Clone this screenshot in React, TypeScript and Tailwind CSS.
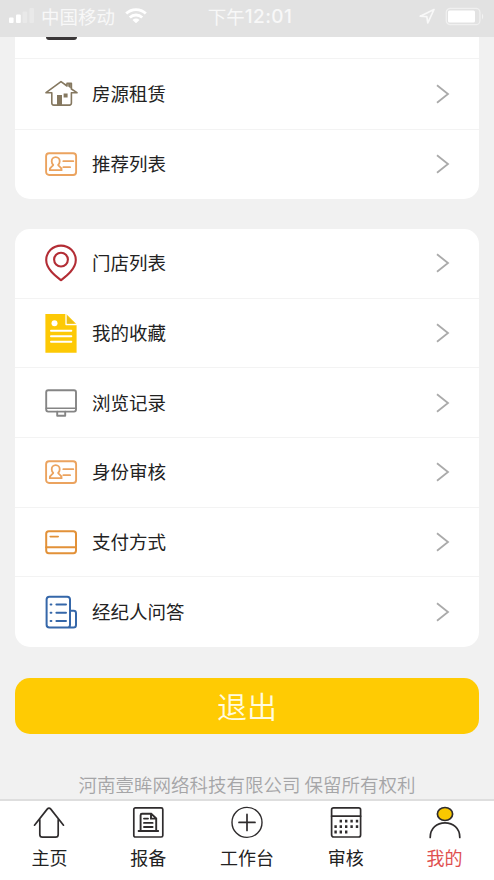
import type { ReactNode } from "react";

function HouseIcon() {
  return (
    <g stroke="#857860" strokeWidth="1.6">
      <path d="M3 20.7 18 9.6l6 4.4v-2.6h4.4v5.6l5.6 3.7M3 20.7h5.8v10.4q0 2 2 2h15.6q2 0 2-2V20.7H34" />
      <path d="M14 23h5v10h-5z" fill="#857860" stroke="none" />
      <path d="M20.6 21.5h4v4h-4z" fill="#857860" stroke="none" />
      <path d="M25.2 12h2.6v4.4l-2.6-2z" fill="#857860" stroke="none" />
    </g>
  );
}

function IdCardIcon() {
  return (
    <g stroke="#eba35f" strokeWidth="1.9">
      <rect x="3.1" y="11.2" width="30" height="21.8" rx="3" />
      <path
        d="M12.7 15.2c-2.5 0-4 1.9-4 4 0 1.5.6 2.8 1.6 3.7-.3 1.6-3.5 1.2-3.5 5.3h11.8c0-4.1-3.2-3.7-3.5-5.3 1-.9 1.6-2.2 1.6-3.7 0-2.1-1.5-4-4-4z"
        strokeWidth="1.8"
      />
      <path d="M20.3 19.2h10M20.3 25.2h6.8" strokeWidth="1.8" />
    </g>
  );
}

function PinIcon() {
  return (
    <g stroke="#b32d35" strokeWidth="2.1">
      <path d="M18 39.2C12.5 35 3.2 28 3.2 19a14.8 14.4 0 0 1 29.6 0C32.8 28 23.5 35 18 39.2z" />
      <circle cx="18" cy="18.6" r="6.9" />
    </g>
  );
}

function NoteIcon() {
  return (
    <g>
      <path d="M2.4 3h20.8l10.4 10.3v28.4H2.4z" fill="#fdc905" />
      <path d="M23 3v10.5h10.6" stroke="#fff" strokeWidth="1.3" />
      <path d="M24 5l7.6 7.5H24z" fill="#e9bd18" />
      <circle cx="11.5" cy="12.2" r="3" fill="#fff" />
      <path d="M8 19.7h20.3M8 25.2h20.3M8 30.7h20.3" stroke="#fff" strokeWidth="2" />
    </g>
  );
}

function MonitorIcon() {
  return (
    <g stroke="#858585" strokeWidth="1.9">
      <rect x="3.2" y="9.2" width="29.8" height="21.4" rx="2" />
      <path d="M3.2 27.2H33" strokeWidth="1.6" />
      <path d="M14.2 30.6v4.2h8v-4.2" />
    </g>
  );
}

function CreditCardIcon() {
  return (
    <g stroke="#e29138" strokeWidth="2">
      <rect x="3.2" y="11.2" width="29.8" height="22" rx="2.6" />
      <path d="M3.2 27.2H33" />
      <path d="M7.2 16.6h8" strokeWidth="1.6" />
    </g>
  );
}

function QaIcon() {
  return (
    <g stroke="#3567a9" strokeWidth="2">
      <path d="M27 20.6V9.6q0-2.8-2.8-2.8H6.4q-2.8 0-2.8 2.8v25.2q0 2.8 2.8 2.8h24q2.6 0 2.6-2.6V23.2q0-2.4-2.4-2.4H27v13.7q0 3.1-2 3.1" />
      <path d="M13.4 14.6H23M13.4 22.8H23M13.4 31H23" />
      <path d="M7.6 14.6h.8M7.6 22.8h.8M7.6 31h.8" />
    </g>
  );
}

function Row({ icon, label }: { icon: ReactNode; label: string }) {
  return (
    <li className="flex flex-1 items-center pl-7 pr-[29px]">
      <svg width="36" height="44" viewBox="0 0 36 44" fill="none" strokeLinejoin="round" strokeLinecap="round">
        {icon}
      </svg>
      <span className="ml-[13px] flex-1 pb-[2px] text-[18.5px] leading-6 text-[#222]">{label}</span>
      <svg width="15" height="22" viewBox="0 0 15 22" fill="none" stroke="#aaa" strokeWidth="1.8">
        <path d="M2 2.2 13 11 2 19.8" />
      </svg>
    </li>
  );
}

const services = [
  { label: "门店列表", icon: <PinIcon /> },
  { label: "我的收藏", icon: <NoteIcon /> },
  { label: "浏览记录", icon: <MonitorIcon /> },
  { label: "身份审核", icon: <IdCardIcon /> },
  { label: "支付方式", icon: <CreditCardIcon /> },
  { label: "经纪人问答", icon: <QaIcon /> },
];

const tabs = [
  {
    label: "主页",
    icon: (
      <path d="M1.5 19.2 14.2 3.1q1.8-2 3.6 0l12.7 16.1M6.8 13.5v15q0 2.7 2.7 2.7h13q2.7 0 2.7-2.7v-15" />
    ),
  },
  {
    label: "报备",
    icon: (
      <>
        <rect x="1.8" y="1.8" width="29" height="29.2" rx="1.6" />
        <path d="M6.6 25h19.6M8.6 25V9.2q0-1.4 1.4-1.4h9.2l5 4.6V25M19 7.8v4.8h5M12 12.6h4M12 16.9h8.6M12 21h8.6" strokeWidth="1.9" />
      </>
    ),
  },
  {
    label: "工作台",
    icon: (
      <>
        <circle cx="16" cy="16.4" r="15" strokeWidth="1.4" />
        <path d="M16 8.4v16M8 16.4h16" />
      </>
    ),
  },
  {
    label: "审核",
    icon: (
      <>
        <rect x="1.6" y="1.8" width="29" height="29.2" rx="2" />
        <path d="M1.6 10.2h29" />
        <path
          d="M9.6 15.2h2.4m3 0h2.4m3 0h2.4m3 0h2.4M4.4 20.6h2.4m2.8 0h2.4m3 0h2.4m3 0h2.4m3 0h2.4M4.4 26h2.4m2.8 0h2.4m3 0h2.4"
          strokeWidth="2.8"
          strokeLinecap="butt"
        />
      </>
    ),
  },
  {
    label: "我的",
    active: true,
    icon: (
      <>
        <ellipse cx="16" cy="8" rx="7.6" ry="6.5" fill="#f9c800" />
        <path d="M1.2 31.4C1.2 22 8 16.9 16 16.9S30.8 22 30.8 31.4" />
      </>
    ),
  },
];

function StatusBar() {
  return (
    <header className="grid h-[37px] shrink-0 grid-cols-3 items-center bg-[#e2e2e2] pb-[5px] pl-[9px] pr-[9px] text-[18.5px] leading-none text-[#f8f8f8]">
      <div className="flex items-center">
        <svg width="26" height="16" viewBox="0 0 26 16" fill="#fff">
          <rect y="9.5" width="4.6" height="5.5" rx="1" />
          <rect x="7" y="6.5" width="4.8" height="8.5" rx="1" />
          <rect x="13.6" y="3.5" width="4.6" height="11.5" rx="1" opacity=".25" />
          <rect x="20.4" y="0" width="4.6" height="15" rx="1" opacity=".25" />
        </svg>
        <span className="ml-[6px] whitespace-nowrap">中国移动</span>
        <svg className="ml-[10px] shrink-0" width="22" height="16" viewBox="0 0 22 16" fill="none" stroke="#fff" strokeWidth="2.8">
          <path d="M1.2 5.6a14 14 0 0 1 19.6 0M4.8 9.5a9 9 0 0 1 12.4 0" />
          <path d="M11 15.2 7.5 11.9q3.5-2.6 7 0z" fill="#fff" stroke="none" />
        </svg>
      </div>
      <div className="flex items-center justify-center pl-[6px]">
        <span>下午</span>
        <span className="font-['Inter'] text-[19px] font-medium tracking-[0.4px]">12:01</span>
      </div>
      <div className="flex items-center justify-end">
        <svg width="16" height="16" viewBox="0 0 16 16" fill="none" stroke="#f8f8f8" strokeWidth="1.7" strokeLinejoin="round">
          <path d="M15 1.5 1.2 8.2l6.6.5 1 6.2z" />
        </svg>
        <svg className="ml-[10px]" width="40" height="19" viewBox="0 0 40 19" fill="none">
          <rect x="1.3" y="1.3" width="33.6" height="16.4" rx="4" stroke="#f0f0f0" strokeWidth="1.3" />
          <rect x="3" y="3.5" width="27" height="12" rx="1.5" fill="#fff" />
          <path d="M37 6.5q2.4 3 0 6z" fill="#f3f3f3" />
        </svg>
      </div>
    </header>
  );
}

export default function App() {
  return (
    <div className="flex h-[880px] w-[494px] flex-col overflow-hidden bg-[#f1f1f1] font-['Noto_Sans_CJK_SC',sans-serif]">
      <StatusBar />
      <main className="flex flex-1 flex-col px-[15px]">
        <section className="flex h-[162px] flex-col rounded-b-[15px] bg-white">
          {/* bottom edge of the row scrolled under the status bar */}
          <div className="h-[22px] shrink-0 border-b border-[#f3f3f3] pl-[31px]">
            <div className="h-[3px] w-[31px] rounded-b-[3px] bg-[#3a3738]" />
          </div>
          <ul className="flex flex-1 flex-col divide-y divide-[#f3f3f3]">
            <Row icon={<HouseIcon />} label="房源租赁" />
            <Row icon={<IdCardIcon />} label="推荐列表" />
          </ul>
        </section>
        <ul className="mt-[30px] flex h-[418px] flex-col divide-y divide-[#f3f3f3] rounded-[15px] bg-white pb-px">
          {services.map((item) => (
            <Row key={item.label} icon={item.icon} label={item.label} />
          ))}
        </ul>
        <button className="mt-[31px] flex h-14 items-center justify-center rounded-[15px] bg-[#ffcb03] text-[30px] font-[350] leading-none text-[#fffbe0]">
          <span className="pb-[2px]">退出</span>
        </button>
        <p className="mt-[37px] text-center text-[18.5px] font-[350] leading-[26px] text-[#a5a5a7]">
          河南壹眸网络科技有限公司 保留所有权利
        </p>
      </main>
      <nav className="grid h-[81px] shrink-0 grid-cols-5 border-t-2 border-[#dedede] bg-white pt-[5px]">
        {tabs.map((tab) => (
          <a key={tab.label} className="flex flex-col items-center">
            <svg width="32" height="33" viewBox="0 0 32 33" fill="none" stroke="#2f2c2d" strokeWidth="1.7" strokeLinecap="round">
              {tab.icon}
            </svg>
            <span className={tab.active ? "mt-[6px] text-[18px] leading-6 text-[#e0504f]" : "mt-[6px] text-[18px] leading-6 text-[#222]"}>
              {tab.label}
            </span>
          </a>
        ))}
      </nav>
    </div>
  );
}
